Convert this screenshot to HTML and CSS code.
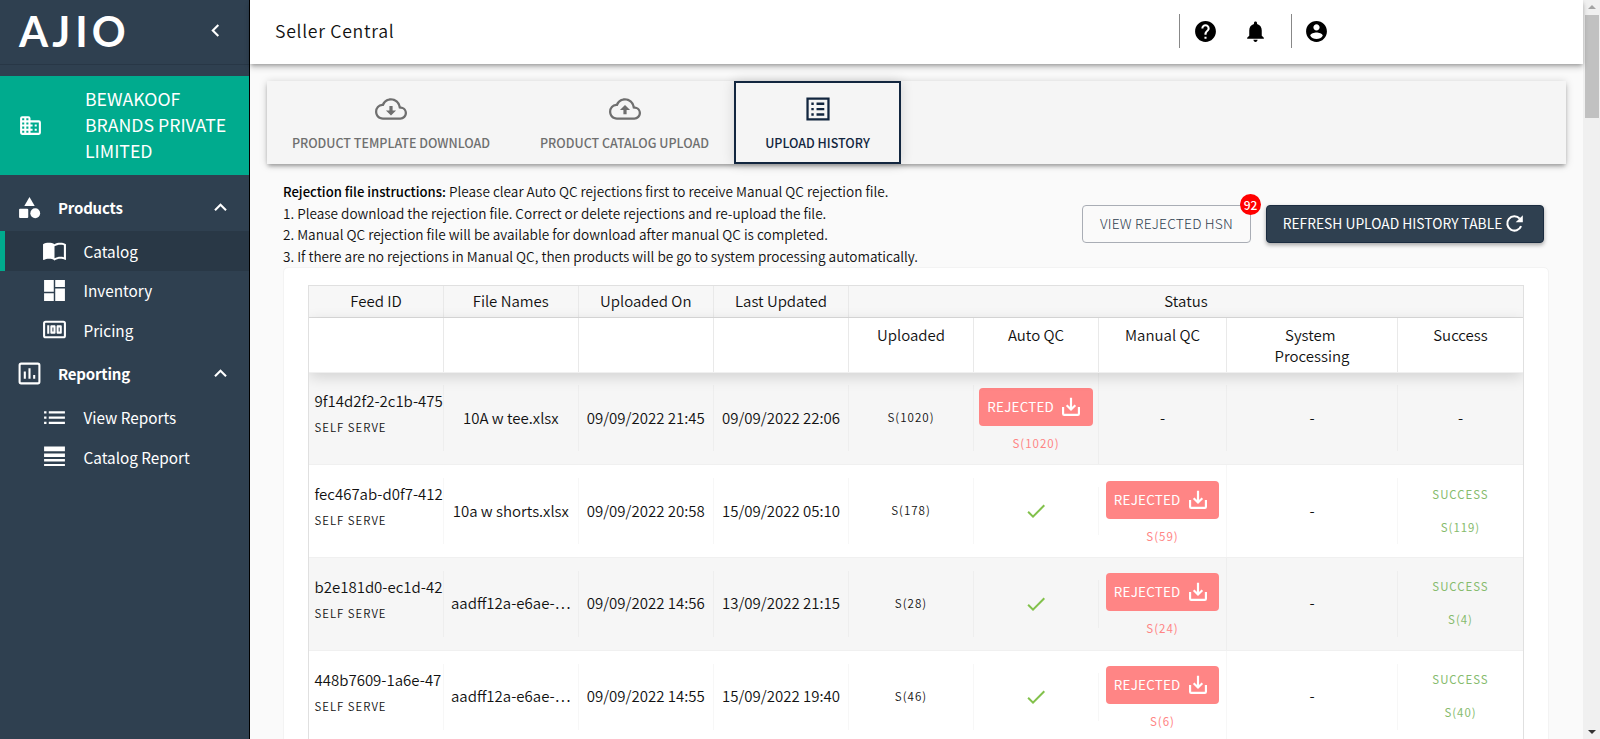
FILE: index.html
```html
<!DOCTYPE html>
<html lang="en">
<head>
    <meta charset="UTF-8">
    <meta name="viewport" content="width=device-width, initial-scale=1.0">
    <title>Seller Central</title>
    <link rel="stylesheet" href="styles.css">
</head>
<body>
    <svg class="defs">
        <symbol id="chevron-up" viewBox="0 0 24 24"><path d="M12 8l-6 6 1.41 1.41L12 10.83l4.59 4.58L18 14z"/></symbol>
        <symbol id="download" viewBox="0 0 24 24"><path d="M2.5 12v8.2q0 1.3 1.3 1.3h16.4q1.3 0 1.3-1.3V12M12 1v14M6.8 9.8l5.2 5.2 5.2-5.2" fill="none" stroke="currentColor" stroke-width="2.6"/></symbol>
        <symbol id="check" viewBox="0 0 24 24"><path d="M9 16.17L4.83 12l-1.42 1.41L9 19 21 7l-1.41-1.41z"/></symbol>
    </svg>
    <aside class="sidebar">
        <div class="brand">
            <div class="logo"><span class="l-a">A</span><span class="l-j">J</span><span class="l-i">I</span><span class="l-o">O</span></div>
            <svg class="icon collapse" viewBox="0 0 24 24"><path d="M15.41 7.41L14 6l-6 6 6 6 1.41-1.41L10.83 12z"/></svg>
        </div>
        <div class="company">
            <svg class="icon" viewBox="0 0 24 24"><path d="M12 7V5q0-2-2-2H4Q2 3 2 5v14q0 2 2 2h16q2 0 2-2V9q0-2-2-2H12zM6 19H4v-2h2v2zm0-4H4v-2h2v2zm0-4H4V9h2v2zm0-4H4V5h2v2zm4 12H8v-2h2v2zm0-4H8v-2h2v2zm0-4H8V9h2v2zm0-4H8V5h2v2zm10 12h-8v-2h2v-2h-2v-2h2v-2h-2V9h8v10zm-2-8h-2v2h2v-2zm0 4h-2v2h2v-2z"/></svg>
            <span>BEWAKOOF<br>BRANDS PRIVATE<br>LIMITED</span>
        </div>
        <nav class="menu">
            <div class="group">
                <svg class="icon" viewBox="0 0 24 24"><path d="M12 2l-5 8.5h10z"/><circle cx="17.5" cy="17.5" r="4.7"/><rect x="2" y="13.2" width="8.8" height="8.8" rx="1"/></svg>
                <span>Products</span>
                <svg class="icon arrow"><use href="#chevron-up"/></svg>
            </div>
            <div class="item active">
                <svg class="icon" viewBox="0 0 24 24"><path d="M21 5c-1.11-.35-2.33-.5-3.5-.5-1.95 0-4.05.4-5.5 1.5-1.45-1.1-3.55-1.5-5.5-1.5S2.45 4.9 1 6v14.65c0 .25.25.5.5.5.1 0 .15-.05.25-.05C3.1 20.45 5.05 20 6.5 20c1.95 0 4.05.4 5.5 1.5 1.35-.85 3.8-1.5 5.5-1.5 1.65 0 3.35.3 4.75 1.05.1.05.15.05.25.05.25 0 .5-.25.5-.5V6c-.6-.45-1.25-.75-2-1zm0 13.5c-1.1-.35-2.3-.5-3.5-.5-1.7 0-4.15.65-5.5 1.5V8c1.35-.85 3.8-1.5 5.5-1.5 1.2 0 2.4.15 3.5.5v11.5z"/></svg>
                <span>Catalog</span>
            </div>
            <div class="item">
                <svg class="icon" viewBox="0 0 24 24"><path d="M2 2h9.3v11.3H2zM12.7 2H22v6.7h-9.3zM2 14.7h9.3V22H2zM12.7 10H22v12h-9.3z"/></svg>
                <span>Inventory</span>
            </div>
            <div class="item">
                <svg class="icon" viewBox="0 0 24 24"><path d="M5 8h2v8H5zm7 0H9c-.55 0-1 .45-1 1v6c0 .55.45 1 1 1h3c.55 0 1-.45 1-1V9c0-.55-.45-1-1-1zm-1 6h-1v-4h1v4zm7-6h-3c-.55 0-1 .45-1 1v6c0 .55.45 1 1 1h3c.55 0 1-.45 1-1V9c0-.55-.45-1-1-1zm-1 6h-1v-4h1v4z"/><rect x="2" y="4.5" width="20" height="15" rx="1.5" fill="none" stroke="currentColor" stroke-width="2"/></svg>
                <span>Pricing</span>
            </div>
            <div class="group">
                <svg class="icon" viewBox="0 0 24 24"><rect x="2.5" y="2.5" width="19" height="19" rx="1.5" fill="none" stroke="currentColor" stroke-width="2"/><path d="M6.5 10h2v7h-2zM11 7h2v10h-2zM15.5 13.5h2V17h-2z"/></svg>
                <span>Reporting</span>
                <svg class="icon arrow"><use href="#chevron-up"/></svg>
            </div>
            <div class="item">
                <svg class="icon" viewBox="0 0 24 24"><path d="M2 6h2.3v2.2H2zM2 11h2.3v2.2H2zM2 16h2.3v2.2H2zM6.5 6H22v2.2H6.5zM6.5 11H22v2.2H6.5zM6.5 16H22v2.2H6.5z"/></svg>
                <span>View Reports</span>
            </div>
            <div class="item">
                <svg class="icon" viewBox="0 0 24 24"><path d="M2 2.5h20V7H2zM2 9h20v3.5H2zM2 14.5h20v2.3H2zM2 19.3h20V21H2z"/></svg>
                <span>Catalog Report</span>
            </div>
        </nav>
    </aside>

    <div class="page">
        <header class="topbar">
            <h1>Seller Central</h1>
            <div class="actions">
                <i class="sep"></i>
                <svg class="icon help" viewBox="0 0 24 24"><path d="M12 2C6.48 2 2 6.48 2 12s4.48 10 10 10 10-4.48 10-10S17.52 2 12 2zm1 17h-2v-2h2v2zm2.07-7.75l-.9.92C13.45 12.9 13 13.5 13 15h-2v-.5c0-1.1.45-2.1 1.17-2.83l1.24-1.26c.37-.36.59-.86.59-1.41 0-1.1-.9-2-2-2s-2 .9-2 2H8c0-2.21 1.79-4 4-4s4 1.79 4 4c0 .88-.36 1.68-.93 2.25z"/></svg>
                <svg class="icon bell" viewBox="0 0 24 24"><path d="M12 22c1.1 0 2-.9 2-2h-4c0 1.1.89 2 2 2zm6-6v-5c0-3.07-1.64-5.64-4.5-6.32V4c0-.83-.67-1.5-1.5-1.5s-1.5.67-1.5 1.5v.68C7.63 5.36 6 7.92 6 11v5l-2 2v1h16v-1l-2-2z"/></svg>
                <i class="sep"></i>
                <svg class="icon" viewBox="0 0 24 24"><path d="M12 2C6.48 2 2 6.48 2 12s4.48 10 10 10 10-4.48 10-10S17.52 2 12 2zm0 3c1.66 0 3 1.34 3 3s-1.34 3-3 3-3-1.34-3-3 1.34-3 3-3zm0 14.2c-2.5 0-4.71-1.28-6-3.22.03-1.99 4-3.08 6-3.08 1.99 0 5.97 1.09 6 3.08-1.29 1.94-3.5 3.22-6 3.22z"/></svg>
            </div>
        </header>

        <main>
            <div class="tabs">
                <div class="tab tab-download">
                    <svg viewBox="0 0 24 24"><path d="M19.35 10.04A7.49 7.49 0 0 0 12 4C9.11 4 6.6 5.64 5.35 8.04A5.994 5.994 0 0 0 0 14c0 3.31 2.69 6 6 6h13c2.76 0 5-2.24 5-5 0-2.64-2.05-4.78-4.65-4.96zM19 18.3H6c-2.4 0-4.3-1.9-4.3-4.3 0-2.2 1.7-4 3.9-4.2l.9-.1.5-.95A5.7 5.7 0 0 1 12 5.7c2.7 0 5 1.9 5.6 4.6l.3 1.4 1.4.1A3.2 3.2 0 0 1 22.3 15c0 1.8-1.5 3.3-3.3 3.3z"/><path d="M10.8 9.8h2.4v3.3h2.6L12 16.8l-3.8-3.7h2.6z"/></svg>
                    <span>PRODUCT TEMPLATE DOWNLOAD</span>
                </div>
                <div class="tab tab-upload">
                    <svg viewBox="0 0 24 24"><path d="M19.35 10.04A7.49 7.49 0 0 0 12 4C9.11 4 6.6 5.64 5.35 8.04A5.994 5.994 0 0 0 0 14c0 3.31 2.69 6 6 6h13c2.76 0 5-2.24 5-5 0-2.64-2.05-4.78-4.65-4.96zM19 18.3H6c-2.4 0-4.3-1.9-4.3-4.3 0-2.2 1.7-4 3.9-4.2l.9-.1.5-.95A5.7 5.7 0 0 1 12 5.7c2.7 0 5 1.9 5.6 4.6l.3 1.4 1.4.1A3.2 3.2 0 0 1 22.3 15c0 1.8-1.5 3.3-3.3 3.3z"/><path d="M10.8 16h2.4v-3.3h2.6L12 9l-3.8 3.7h2.6z"/></svg>
                    <span>PRODUCT CATALOG UPLOAD</span>
                </div>
                <div class="tab tab-history selected">
                    <svg viewBox="0 0 24 24"><path d="M3.3 3.3v17.4h17.4V3.3zM5 5h14v14H5z" fill-rule="evenodd"/><path d="M7 7.2h1.8V9H7zm0 4h1.8V13H7zm0 4h1.8V17H7zm3.9-8h5.8V9h-5.8zm0 4h5.8V13h-5.8zm0 4h5.8V17h-5.8z"/></svg>
                    <span>UPLOAD HISTORY</span>
                </div>
            </div>

            <section class="intro">
                <div class="instructions">
                    <p><b>Rejection file instructions:</b> Please clear Auto QC rejections first to receive Manual QC rejection file.</p>
                    <p>1. Please download the rejection file. Correct or delete rejections and re-upload the file.</p>
                    <p>2. Manual QC rejection file will be available for download after manual QC is completed.</p>
                    <p>3. If there are no rejections in Manual QC, then products will be go to system processing automatically.</p>
                </div>
                <div class="buttons">
                    <button class="btn-outline">VIEW REJECTED HSN<span class="badge">92</span></button>
                    <button class="btn-dark">REFRESH UPLOAD HISTORY TABLE
                        <svg viewBox="0 0 24 24"><path d="M20.3 15.2A9 9 0 1 1 18.6 5.9" fill="none" stroke="currentColor" stroke-width="2.6"/><path d="M22.5 1.5v9h-9z"/></svg>
                    </button>
                </div>
            </section>

            <section class="card">
                <div class="table">
                    <div class="row head">
                        <div>Feed ID</div>
                        <div>File Names</div>
                        <div>Uploaded On</div>
                        <div>Last Updated</div>
                        <div class="status">Status</div>
                    </div>
                    <div class="row subhead">
                        <div></div>
                        <div></div>
                        <div></div>
                        <div></div>
                        <div>Uploaded</div>
                        <div>Auto QC</div>
                        <div>Manual QC</div>
                        <div>System&nbsp;<br>Processing</div>
                        <div>Success</div>
                    </div>
                    <div class="row">
                        <div class="feed"><span>9f14d2f2-2c1b-475</span><small>SELF SERVE</small></div>
                        <div>10A w tee.xlsx</div>
                        <div>09/09/2022 21:45</div>
                        <div>09/09/2022 22:06</div>
                        <div class="count">S(1020)</div>
                        <div class="rejected full"><button>REJECTED <svg><use href="#download"/></svg></button><span>S(1020)</span></div>
                        <div>-</div>
                        <div>-</div>
                        <div>-</div>
                    </div>
                    <div class="row">
                        <div class="feed"><span>fec467ab-d0f7-412</span><small>SELF SERVE</small></div>
                        <div>10a w shorts.xlsx</div>
                        <div>09/09/2022 20:58</div>
                        <div>15/09/2022 05:10</div>
                        <div class="count">S(178)</div>
                        <div class="ok"><svg><use href="#check"/></svg></div>
                        <div class="rejected full"><button>REJECTED <svg><use href="#download"/></svg></button><span>S(59)</span></div>
                        <div>-</div>
                        <div class="success"><span>SUCCESS</span><span>S(119)</span></div>
                    </div>
                    <div class="row">
                        <div class="feed"><span>b2e181d0-ec1d-42</span><small>SELF SERVE</small></div>
                        <div>aadff12a-e6ae-…</div>
                        <div>09/09/2022 14:56</div>
                        <div>13/09/2022 21:15</div>
                        <div class="count">S(28)</div>
                        <div class="ok"><svg><use href="#check"/></svg></div>
                        <div class="rejected full"><button>REJECTED <svg><use href="#download"/></svg></button><span>S(24)</span></div>
                        <div>-</div>
                        <div class="success"><span>SUCCESS</span><span>S(4)</span></div>
                    </div>
                    <div class="row">
                        <div class="feed"><span>448b7609-1a6e-47</span><small>SELF SERVE</small></div>
                        <div>aadff12a-e6ae-…</div>
                        <div>09/09/2022 14:55</div>
                        <div>15/09/2022 19:40</div>
                        <div class="count">S(46)</div>
                        <div class="ok"><svg><use href="#check"/></svg></div>
                        <div class="rejected full"><button>REJECTED <svg><use href="#download"/></svg></button><span>S(6)</span></div>
                        <div>-</div>
                        <div class="success"><span>SUCCESS</span><span>S(40)</span></div>
                    </div>
                </div>
            </section>
        </main>
    </div>

    <div class="scrollbar">
        <i class="up"></i>
        <i class="thumb"></i>
        <i class="down"></i>
    </div>
</body>
</html>
```
FILE: styles.css
```css
* {
    box-sizing: border-box;
}
body {
    margin: 0;
    height: 739px;
    display: flex;
    overflow: hidden;
    background: #fafafa;
    color: #111;
    font-family: "Noto Sans CJK SC", "Noto Sans", sans-serif;
    font-size: 14px;
}
svg {
    fill: currentColor;
    flex: none;
}
button {
    font-family: inherit;
}
.defs {
    display: none;
}
.icon {
    width: 25px;
    height: 25px;
}

/* sidebar */
.sidebar {
    width: 250px;
    flex: none;
    background: #2f4050;
    border-right: 1px solid #000;
    color: #fff;
}
.brand {
    height: 65px;
    display: flex;
    align-items: center;
    justify-content: space-between;
    padding: 0 21px 3px 19px;
    border-bottom: 1px solid #283746;
}
.logo {
    display: flex;
    font-family: Lato, sans-serif;
    font-weight: 700;
    font-size: 42px;
    line-height: 60px;
}
.l-j {
    margin-left: 4px;
}
.l-i {
    margin-left: 5px;
}
.l-o {
    margin-left: 4px;
}
.company {
    height: 99px;
    margin-top: 11px;
    display: flex;
    align-items: center;
    padding-left: 18px;
    background: #00ab8e;
    font-size: 17.7px;
    line-height: 26.3px;
}
.company span {
    margin: -3px 0 0 42px;
    white-space: nowrap;
}
.menu {
    padding-top: 8px;
}
.group {
    height: 48px;
    display: flex;
    align-items: center;
    padding: 0 16px 0 17px;
    font-size: 15px;
    font-weight: 700;
    letter-spacing: -.2px;
}
.group span {
    margin-left: 16px;
    flex: 1;
}
.item {
    height: 39.5px;
    display: flex;
    align-items: center;
    padding-left: 37px;
    border-left: 5px solid transparent;
    font-size: 15.3px;
}
.item span {
    margin-left: 16.5px;
}
.item.active {
    background: #293846;
    border-left-color: #00ab8e;
}

/* top bar */
.page {
    flex: 1;
    min-width: 0;
}
.topbar {
    height: 64px;
    display: flex;
    align-items: center;
    justify-content: space-between;
    padding: 0 254px 2px 25px;
    background: #fff;
    box-shadow: 0 2px 4px -1px rgba(0,0,0,.3), 0 4px 6px rgba(0,0,0,.16);
    position: relative;
}
.topbar h1 {
    margin: -2px 0 0;
    font-size: 17.7px;
    font-weight: 350;
    letter-spacing: .7px;
}
.actions {
    display: flex;
    align-items: center;
    color: #000;
}
.sep {
    width: 1px;
    height: 34px;
    background: #888;
}
.help {
    margin: 0 25px 0 13px;
}
.bell {
    margin-right: 23px;
}
.sep + .icon:last-child {
    margin-left: 12px;
}

/* tabs */
main {
    padding: 17px 17px 0 17px;
}
.tabs {
    height: 83px;
    display: flex;
    background: #f5f5f5;
    box-shadow: 0 3px 4px -1px rgba(0,0,0,.3), 0 1px 8px rgba(0,0,0,.18);
}
.tab {
    display: flex;
    flex-direction: column;
    align-items: center;
    padding-top: 12px;
    color: #6f6f6f;
    font-size: 12.5px;
    font-weight: 500;
    line-height: 20px;
    white-space: nowrap;
}
.tab svg {
    width: 32px;
    height: 32px;
    margin-bottom: 8px;
}
.tab-download {
    width: 248px;
}
.tab-upload {
    width: 219px;
}
.tab-history {
    width: 167px;
}
.selected {
    padding-top: 10px;
    border: 2px solid #12263f;
    color: #12263f;
    box-shadow: 0 0 12px rgba(0,0,0,.14);
}

/* instructions and buttons */
.intro {
    height: 103px;
    display: flex;
    justify-content: space-between;
    padding: 17px 22px 0 16px;
}
.instructions p {
    margin: 0;
    font-size: 13.6px;
    font-weight: 350;
    line-height: 21.65px;
    white-space: nowrap;
}
.instructions b {
    font-size: 13.1px;
    font-weight: 500;
    color: #000;
}
.buttons {
    display: flex;
    gap: 15px;
    margin-top: 24px;
}
.buttons button {
    height: 38px;
    padding: 0 0 2px;
    display: flex;
    align-items: center;
    justify-content: center;
    border-radius: 4px;
    font-size: 13.8px;
    white-space: nowrap;
}
.buttons .btn-outline {
    width: 169px;
    position: relative;
    background: transparent;
    border: 1px solid #a9adb5;
    color: #2f4050;
    font-weight: 300;
    letter-spacing: .2px;
}
.buttons .btn-dark {
    width: 278px;
    padding-right: 3px;
    gap: 3px;
    background: #2f4050;
    border: 1px solid #1b2c40;
    color: #fff;
    box-shadow: 0 2px 4px rgba(0,0,0,.35);
}
.btn-dark svg {
    width: 19px;
    height: 19px;
    margin-top: 1px;
}
.badge {
    position: absolute;
    top: -12px;
    right: -11px;
    width: 21px;
    height: 21px;
    border-radius: 50%;
    background: #f00;
    color: #fff;
    font-size: 12px;
    font-weight: 500;
    line-height: 21px;
    letter-spacing: 0;
}

/* upload history table */
.card {
    margin: 0 17px 0 16px;
    height: 500px;
    padding: 17px 24px 0;
    background: #fff;
    border: 1px solid #f3f3f3;
    border-radius: 5px;
}
.table {
    border: 1px solid #e0e0e0;
    font-size: 15px;
    font-weight: 350;
    overflow: hidden;
}
.row {
    display: grid;
    grid-template-columns: 135px 134.5px 135.5px 135px 125px 125px 128px 171px 1fr;
    height: 92.7px;
    align-items: center;
    text-align: center;
    white-space: nowrap;
    border-bottom: 1px solid #f0f0f0;
}
.row > div {
    height: 66px;
    display: flex;
    align-items: center;
    justify-content: center;
    padding-bottom: 2px;
    border-right: 1px solid rgba(0,0,0,.03);
}
.row > div:last-child {
    border-right: 0;
}
.row:nth-child(odd) {
    background: #f6f6f6;
}
.row.head {
    height: 32px;
    background: #f7f7f7;
    border-bottom-color: #dcdcdc;
}
.row.subhead {
    height: 54.6px;
    position: relative;
    background: #fff;
    box-shadow: 0 4px 14px rgba(0,0,0,.15);
    line-height: 21px;
}
.row.head > div,
.row.subhead > div {
    height: 100%;
    padding-bottom: 2px;
    border-right-color: #e9e9e9;
}
.row.subhead > div {
    align-items: flex-start;
    padding-top: 6px;
}
.status {
    grid-column: 5 / -1;
}
.row > .feed {
    flex-direction: column;
    align-items: flex-start;
    justify-content: flex-start;
    padding-left: 5.5px;
    line-height: 26px;
}
.feed span {
    margin-top: 3px;
}
.feed small {
    font-size: 11.4px;
    letter-spacing: 1px;
}
.count {
    font-size: 11.6px;
    letter-spacing: 1px;
}
.row > .full {
    height: 100%;
    padding-bottom: 0;
}
.rejected {
    flex-direction: column;
    color: #ff8585;
    font-size: 11.5px;
    font-weight: 400;
    letter-spacing: 1px;
}
.rejected button {
    width: 113.5px;
    height: 38px;
    margin: 2px 0 9px;
    padding: 0 0 2px 8px;
    display: flex;
    align-items: center;
    gap: 7px;
    border: 0;
    border-radius: 4px;
    background: #ff8585;
    color: #fff;
    font-size: 13.4px;
    letter-spacing: .25px;
}
.rejected button svg {
    width: 20px;
    height: 20px;
    margin-top: 2px;
}
.row > .ok {
    height: 48px;
    padding-bottom: 0;
    color: #82c14b;
}
.ok svg {
    width: 24px;
    height: 24px;
}
.row > .success {
    flex-direction: column;
    gap: 17px;
    padding-bottom: 2px;
    color: #86bb6d;
    font-size: 11.4px;
    font-weight: 400;
    letter-spacing: 1px;
}

/* page scrollbar */
.scrollbar {
    width: 17px;
    flex: none;
    display: flex;
    flex-direction: column;
    align-items: center;
    padding: 5px 0;
    background: #f0f0f0;
}
.up,
.down {
    border: 4px solid transparent;
}
.up {
    border-top: 0;
    border-bottom-color: #a3a3a3;
}
.thumb {
    width: 14px;
    height: 103px;
    margin-top: 6px;
    background: #c1c1c1;
}
.down {
    margin-top: auto;
    border-bottom: 0;
    border-top-color: #333;
}
```
